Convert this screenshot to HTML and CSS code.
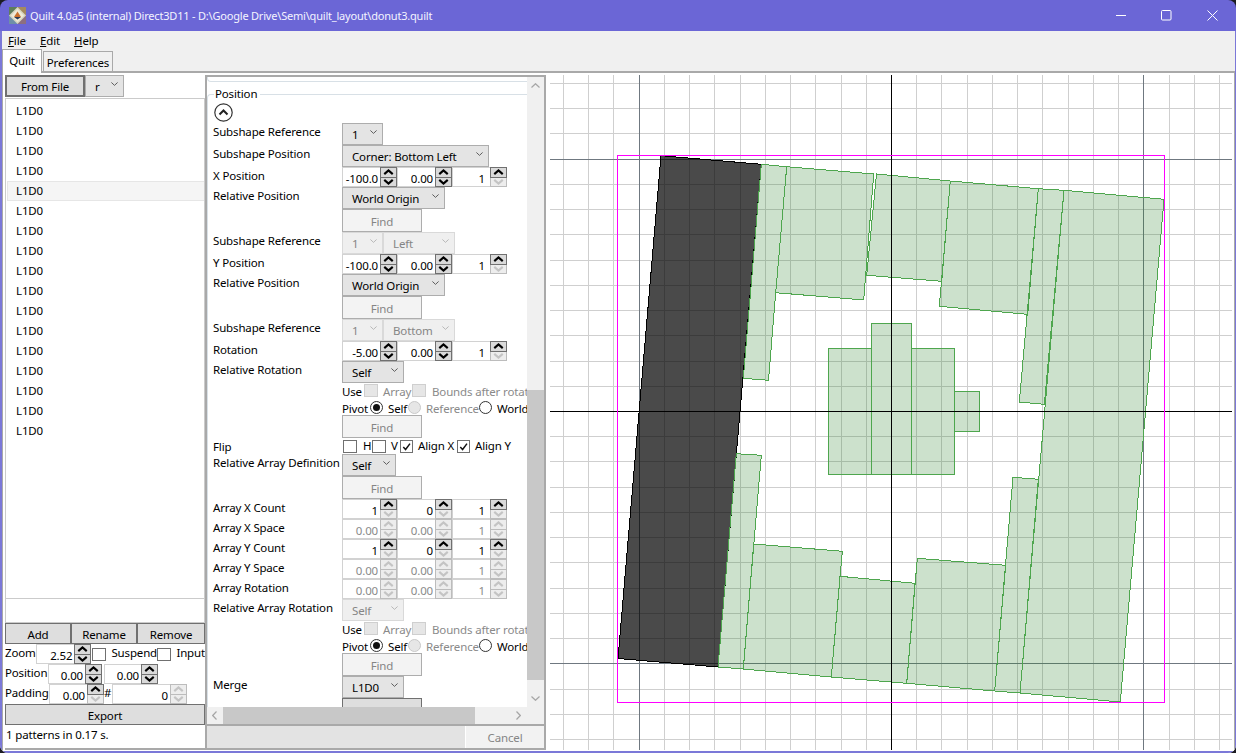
FILE: index.html
```html
<!DOCTYPE html>
<html lang="en">
<head>
<meta charset="utf-8">
<title>Quilt</title>
<link rel="stylesheet" href="styles.css">
</head>
<body>
<svg class="defs" width="0" height="0">
  <symbol id="up" viewBox="0 0 13 7"><path d="M1.5 6 6.5 1.7 11.500 6"/></symbol>
  <symbol id="down" viewBox="0 0 13 7"><path d="M1.5 1 6.5 5.300 11.500 1"/></symbol>
  <symbol id="dd" viewBox="0 0 9 5"><path d="M.5 .5 4.500 4.300 8.500 .5"/></symbol>
</svg>
<div class="window">
  <header class="titlebar">
    <svg class="app-icon" width="17" height="17" viewBox="0 0 17 17">
      <rect width="17" height="17" fill="#d8d5c2"/>
      <path d="M0 0H8.500L0 8.500Z" fill="#5f7d5c"/>
      <path d="M17 0V8.500L8.500 0Z" fill="#a58a5e"/>
      <path d="M0 17V8.500L8.500 17Z" fill="#6f8fa8"/>
      <path d="M17 17H8.500L17 8.500Z" fill="#8d6f7f"/>
      <path d="M8.500 2 15 8.500 8.500 15 2 8.500Z" fill="#efe9d6"/>
      <path d="M8.500 4.500 12 10H5Z" fill="#c9702e"/>
      <path d="M5 10H12L8.500 12.500Z" fill="#2c3a55"/>
    </svg>
    <span class="title-text">Quilt 4.0a5 (internal) Direct3D11 - D:\Google Drive\Semi\quilt_layout\donut3.quilt</span>
    <div class="win-controls">
      <svg width="10" height="11" viewBox="0 0 10 11"><path d="M0 5.500H10"/></svg>
      <svg width="11" height="11" viewBox="0 0 11 11"><rect x=".5" y=".5" width="9.500" height="9.500" rx="1"/></svg>
      <svg width="11" height="11" viewBox="0 0 11 11"><path d="M.5 .5 10.500 10.500M10.500 .5 .5 10.500"/></svg>
    </div>
  </header>
  <div class="main">
    <nav class="menubar">
      <span class="menu-file"><u>F</u>ile</span>
      <span class="menu-edit"><u>E</u>dit</span>
      <span class="menu-help"><u>H</u>elp</span>
    </nav>
    <div class="tabs">
      <div class="tab tab-active">Quilt</div>
      <div class="tab tab-pref">Preferences</div>
    </div>
    <div class="body">
      <aside class="left">
        <div class="src-row">
          <button class="btn btn-src">From File</button>
          <div class="dd dd-r">r<svg class="dd-arrow"><use href="#dd"/></svg></div>
        </div>
        <ul class="list">
          <li>L1D0</li><li>L1D0</li><li>L1D0</li><li>L1D0</li>
          <li class="selected">L1D0</li>
          <li>L1D0</li><li>L1D0</li><li>L1D0</li><li>L1D0</li><li>L1D0</li><li>L1D0</li><li>L1D0</li><li>L1D0</li><li>L1D0</li><li>L1D0</li><li>L1D0</li><li>L1D0</li>
        </ul>
        <div class="name-input"></div>
        <div class="btn-row">
          <button class="btn btn-add">Add</button>
          <button class="btn btn-add">Rename</button>
          <button class="btn btn-remove">Remove</button>
        </div>
        <div class="tool-row">
          <span class="tlabel t-zoom">Zoom</span>
          <div class="spin s-55"><span class="val">2.52</span><div class="sb"><i><svg><use href="#up"/></svg></i><i><svg><use href="#down"/></svg></i></div></div>
          <span class="check tool-check"></span><span class="opt-text t-suspend">Suspend</span>
          <span class="check"></span><span class="opt-text t-input">Input</span>
        </div>
        <div class="tool-row">
          <span class="tlabel t-pos">Position</span>
          <div class="spin s-54"><span class="val">0.00</span><div class="sb"><i><svg><use href="#up"/></svg></i><i><svg><use href="#down"/></svg></i></div></div>
          <div class="spin s-54 s-gap"><span class="val">0.00</span><div class="sb"><i><svg><use href="#up"/></svg></i><i><svg><use href="#down"/></svg></i></div></div>
        </div>
        <div class="tool-row">
          <span class="tlabel t-pad">Padding</span>
          <div class="spin s-55"><span class="val">0.00</span><div class="sb"><i><svg><use href="#up"/></svg></i><i class="off"><svg><use href="#down"/></svg></i></div></div>
          <span class="tlabel t-hash">#</span>
          <div class="spin s-75"><span class="val">0</span><div class="sb"><i class="off"><svg><use href="#up"/></svg></i><i class="off"><svg><use href="#down"/></svg></i></div></div>
        </div>
        <button class="btn btn-export">Export</button>
        <div class="status">1 patterns in 0.17 s.</div>
      </aside>

      <section class="middle">
        <div class="mid-main">
          <div class="viewport">
            <div class="prev-group"></div>
            <div class="group">
              <span class="legend">Position</span>
              <div class="collapse">
                <svg width="19" height="19" viewBox="0 0 19 19"><circle cx="9.500" cy="9.500" r="8.700"/><path d="M5.500 11.500 9.500 7.500 13.500 11.500"/></svg>
              </div>

              <div class="row r22"><span class="lbl">Subshape Reference</span><div class="dd d-40">1<svg class="dd-arrow"><use href="#dd"/></svg></div></div>
              <div class="row r22"><span class="lbl">Subshape Position</span><div class="dd d-147">Corner: Bottom Left<svg class="dd-arrow"><use href="#dd"/></svg></div></div>
              <div class="row r20"><span class="lbl">X Position</span>
                <div class="spin s-a"><span class="val">-100.0</span><div class="sb"><i><svg><use href="#up"/></svg></i><i><svg><use href="#down"/></svg></i></div></div>
                <div class="spin s-b"><span class="val">0.00</span><div class="sb"><i><svg><use href="#up"/></svg></i><i><svg><use href="#down"/></svg></i></div></div>
                <div class="spin s-c"><span class="val val-int">1</span><div class="sb"><i><svg><use href="#up"/></svg></i><i class="off"><svg><use href="#down"/></svg></i></div></div>
              </div>
              <div class="row r22"><span class="lbl">Relative Position</span><div class="dd d-103">World Origin<svg class="dd-arrow"><use href="#dd"/></svg></div></div>
              <div class="row r23"><span class="lbl"></span><button class="btn find">Find</button></div>

              <div class="row r22"><span class="lbl">Subshape Reference</span><div class="dd d-40 dis">1<svg class="dd-arrow"><use href="#dd"/></svg></div><div class="dd d-73 dis">Left<svg class="dd-arrow"><use href="#dd"/></svg></div></div>
              <div class="row r20"><span class="lbl">Y Position</span>
                <div class="spin s-a"><span class="val">-100.0</span><div class="sb"><i><svg><use href="#up"/></svg></i><i><svg><use href="#down"/></svg></i></div></div>
                <div class="spin s-b"><span class="val">0.00</span><div class="sb"><i><svg><use href="#up"/></svg></i><i><svg><use href="#down"/></svg></i></div></div>
                <div class="spin s-c"><span class="val val-int">1</span><div class="sb"><i><svg><use href="#up"/></svg></i><i class="off"><svg><use href="#down"/></svg></i></div></div>
              </div>
              <div class="row r22"><span class="lbl">Relative Position</span><div class="dd d-103">World Origin<svg class="dd-arrow"><use href="#dd"/></svg></div></div>
              <div class="row r23"><span class="lbl"></span><button class="btn find">Find</button></div>

              <div class="row r22"><span class="lbl">Subshape Reference</span><div class="dd d-40 dis">1<svg class="dd-arrow"><use href="#dd"/></svg></div><div class="dd d-73 dis">Bottom<svg class="dd-arrow"><use href="#dd"/></svg></div></div>
              <div class="row r20"><span class="lbl">Rotation</span>
                <div class="spin s-a"><span class="val">-5.00</span><div class="sb"><i><svg><use href="#up"/></svg></i><i><svg><use href="#down"/></svg></i></div></div>
                <div class="spin s-b"><span class="val">0.00</span><div class="sb"><i><svg><use href="#up"/></svg></i><i><svg><use href="#down"/></svg></i></div></div>
                <div class="spin s-c"><span class="val val-int">1</span><div class="sb"><i><svg><use href="#up"/></svg></i><i class="off"><svg><use href="#down"/></svg></i></div></div>
              </div>
              <div class="row r22"><span class="lbl">Relative Rotation</span><div class="dd d-62">Self<svg class="dd-arrow"><use href="#dd"/></svg></div></div>
              <div class="row r17"><span class="lbl"></span>
                <span class="opt-text o-use">Use</span><span class="check check-off"></span><span class="opt-text grey o-array">Array</span><span class="check check-off"></span><span class="opt-text grey o-bounds">Bounds after rotation</span>
              </div>
              <div class="row r15"><span class="lbl"></span>
                <span class="opt-text o-pivot">Pivot</span><span class="radio radio-on"></span><span class="opt-text o-self">Self</span><span class="radio radio-off"></span><span class="opt-text grey o-ref">Reference</span><span class="radio"></span><span class="opt-text o-world">World</span>
              </div>
              <div class="row r23"><span class="lbl"></span><button class="btn find">Find</button></div>

              <div class="row r16"><span class="lbl">Flip</span>
                <span class="check flip-first"></span><span class="opt-text o-h">H</span><span class="check"></span><span class="opt-text o-v">V</span>
                <span class="check checked"><svg viewBox="0 0 12 12"><path d="M2.500 6.500 5 9.300 9.800 2.800"/></svg></span><span class="opt-text o-alignx">Align X</span>
                <span class="check checked"><svg viewBox="0 0 12 12"><path d="M2.500 6.500 5 9.300 9.800 2.800"/></svg></span><span class="opt-text o-aligny">Align Y</span>
              </div>
              <div class="row r22"><span class="lbl">Relative Array Definition</span><div class="dd d-53">Self<svg class="dd-arrow"><use href="#dd"/></svg></div></div>
              <div class="row r23"><span class="lbl"></span><button class="btn find">Find</button></div>

              <div class="row r20"><span class="lbl">Array X Count</span>
                <div class="spin s-a"><span class="val">1</span><div class="sb"><i><svg><use href="#up"/></svg></i><i class="off"><svg><use href="#down"/></svg></i></div></div>
                <div class="spin s-b"><span class="val">0</span><div class="sb"><i><svg><use href="#up"/></svg></i><i class="off"><svg><use href="#down"/></svg></i></div></div>
                <div class="spin s-c"><span class="val val-int">1</span><div class="sb"><i><svg><use href="#up"/></svg></i><i class="off"><svg><use href="#down"/></svg></i></div></div>
              </div>
              <div class="row r20"><span class="lbl">Array X Space</span>
                <div class="spin s-a spin-off"><span class="val">0.00</span><div class="sb"><i class="off"><svg><use href="#up"/></svg></i><i class="off"><svg><use href="#down"/></svg></i></div></div>
                <div class="spin s-b spin-off"><span class="val">0.00</span><div class="sb"><i class="off"><svg><use href="#up"/></svg></i><i class="off"><svg><use href="#down"/></svg></i></div></div>
                <div class="spin s-c spin-off"><span class="val val-int">1</span><div class="sb"><i class="off"><svg><use href="#up"/></svg></i><i class="off"><svg><use href="#down"/></svg></i></div></div>
              </div>
              <div class="row r20"><span class="lbl">Array Y Count</span>
                <div class="spin s-a"><span class="val">1</span><div class="sb"><i><svg><use href="#up"/></svg></i><i class="off"><svg><use href="#down"/></svg></i></div></div>
                <div class="spin s-b"><span class="val">0</span><div class="sb"><i><svg><use href="#up"/></svg></i><i class="off"><svg><use href="#down"/></svg></i></div></div>
                <div class="spin s-c"><span class="val val-int">1</span><div class="sb"><i><svg><use href="#up"/></svg></i><i class="off"><svg><use href="#down"/></svg></i></div></div>
              </div>
              <div class="row r20"><span class="lbl">Array Y Space</span>
                <div class="spin s-a spin-off"><span class="val">0.00</span><div class="sb"><i class="off"><svg><use href="#up"/></svg></i><i class="off"><svg><use href="#down"/></svg></i></div></div>
                <div class="spin s-b spin-off"><span class="val">0.00</span><div class="sb"><i class="off"><svg><use href="#up"/></svg></i><i class="off"><svg><use href="#down"/></svg></i></div></div>
                <div class="spin s-c spin-off"><span class="val val-int">1</span><div class="sb"><i class="off"><svg><use href="#up"/></svg></i><i class="off"><svg><use href="#down"/></svg></i></div></div>
              </div>
              <div class="row r20"><span class="lbl">Array Rotation</span>
                <div class="spin s-a spin-off"><span class="val">0.00</span><div class="sb"><i class="off"><svg><use href="#up"/></svg></i><i class="off"><svg><use href="#down"/></svg></i></div></div>
                <div class="spin s-b spin-off"><span class="val">0.00</span><div class="sb"><i class="off"><svg><use href="#up"/></svg></i><i class="off"><svg><use href="#down"/></svg></i></div></div>
                <div class="spin s-c spin-off"><span class="val val-int">1</span><div class="sb"><i class="off"><svg><use href="#up"/></svg></i><i class="off"><svg><use href="#down"/></svg></i></div></div>
              </div>
              <div class="row r22"><span class="lbl">Relative Array Rotation</span><div class="dd d-62 dis">Self<svg class="dd-arrow"><use href="#dd"/></svg></div></div>
              <div class="row r17"><span class="lbl"></span>
                <span class="opt-text o-use">Use</span><span class="check check-off"></span><span class="opt-text grey o-array">Array</span><span class="check check-off"></span><span class="opt-text grey o-bounds">Bounds after rotation</span>
              </div>
              <div class="row r15"><span class="lbl"></span>
                <span class="opt-text o-pivot">Pivot</span><span class="radio radio-on"></span><span class="opt-text o-self">Self</span><span class="radio radio-off"></span><span class="opt-text grey o-ref">Reference</span><span class="radio"></span><span class="opt-text o-world">World</span>
              </div>
              <div class="row r23"><span class="lbl"></span><button class="btn find">Find</button></div>
              <div class="row r22"><span class="lbl">Merge</span><div class="dd d-62">L1D0<svg class="dd-arrow"><use href="#dd"/></svg></div></div>
              <div class="row r23"><span class="lbl"></span><button class="btn find find-on">Find</button></div>
            </div>
          </div>
          <div class="vscroll">
            <svg class="sc-arrow" width="9" height="5"><use href="#dd" transform="matrix(1 0 0 -1 0 5)"/></svg>
            <div class="vtrack"><div class="vthumb"></div></div>
            <svg class="sc-arrow" width="9" height="5"><use href="#dd"/></svg>
          </div>
        </div>
        <div class="hscroll">
          <svg class="sc-h" width="5" height="9" viewBox="0 0 5 9"><path d="M4.500 .5 .7 4.500 4.500 8.500"/></svg>
          <div class="hthumb"></div>
          <svg class="sc-h sc-right" width="5" height="9" viewBox="0 0 5 9"><path d="M.5 .5 4.300 4.500 .5 8.500"/></svg>
        </div>
        <footer class="mid-foot">
          <div class="foot-fill"></div>
          <button class="btn-cancel">Cancel</button>
        </footer>
      </section>

      <div class="canvas">
        <svg class="viewport-svg" viewBox="550 75 682 676" width="682" height="676">
          <path class="grid" d="M563.500 75V751M588.500 75V751M613.500 75V751M664.500 75V751M689.500 75V751M714.500 75V751M740.500 75V751M765.500 75V751M790.500 75V751M815.500 75V751M841.500 75V751M866.500 75V751M916.500 75V751M941.500 75V751M967.500 75V751M992.500 75V751M1017.500 75V751M1042.500 75V751M1068.500 75V751M1093.500 75V751M1118.500 75V751M1169.500 75V751M1194.500 75V751M1219.500 75V751
          M550 83.500H1232M550 108.500H1232M550 133.500H1232M550 184.500H1232M550 209.500H1232M550 234.500H1232M550 260.500H1232M550 285.500H1232M550 310.500H1232M550 335.500H1232M550 361.500H1232M550 386.500H1232M550 436.500H1232M550 461.500H1232M550 487.500H1232M550 512.500H1232M550 537.500H1232M550 562.500H1232M550 588.500H1232M550 613.500H1232M550 638.500H1232M550 689.500H1232M550 714.500H1232M550 739.500H1232"/>
          <path class="major" d="M639.500 75V751M1143.500 75V751M550 159.500H1232M550 663.500H1232"/>
          <polygon class="active-shape" points="661,155.700 761.300,164.300 718,667 618,658.500"/>
          <g class="shapes">
            <polygon points="761.300,164.300 786.700,166.700 775.700,292.700 768.500,380.300 743.300,378.300"/>
            <polygon points="786.700,166.700 873.700,174 863.700,300 775.700,292.700"/>
            <polygon points="876.500,174 950.300,181 941.700,281.300 866.700,275.300"/>
            <polygon points="950.300,181 1038.300,188.700 1027.700,314.300 939.300,306.300"/>
            <polygon points="1038.300,188.700 1064,190.300 1044.300,404.300 1019.300,402"/>
            <polygon points="1064,190.300 1164,199.300 1120.300,702 1020,693"/>
            <polygon points="1013,477.300 1038.300,479.300 1020,693 994.700,691"/>
            <polygon points="917.300,558.300 1005.700,565.300 994.700,691 906.700,683.300"/>
            <polygon points="840,576.300 915,583.300 906.700,683.300 831.300,677"/>
            <polygon points="753.700,544 842.300,551.300 831.300,677 743.300,669"/>
            <polygon points="736.300,453.700 761.300,455.300 743.300,669 718,667"/>
            <rect x="828.500" y="348.500" width="43" height="126"/>
            <rect x="871.500" y="323.500" width="40" height="151"/>
            <rect x="911.500" y="348.500" width="43" height="126"/>
            <rect x="954.500" y="391.500" width="25" height="40"/>
          </g>
          <path class="axis" d="M891.500 75V751M550 411.500H1232"/>
          <rect class="bounds" x="617.500" y="155.500" width="547" height="547"/>
        </svg>
      </div>
    </div>
  </div>
</div>
</body>
</html>
```

FILE: styles.css
```css
* { box-sizing: border-box; }
html, body { margin: 0; padding: 0; background: #1c1c22; }
body {
  width: 1236px;
  height: 753px;
  overflow: hidden;
  font-family: "Noto Sans", "Open Sans", sans-serif;
  font-size: 11.5px;
  letter-spacing: -.15px;
  color: #000;
}
.defs { position: absolute; }
symbol path { fill: none; }

.window {
  width: 1236px;
  height: 753px;
  display: flex;
  flex-direction: column;
  border-radius: 8px;
  overflow: hidden;
}

.titlebar {
  height: 31px;
  flex: none;
  background: #6b66d6;
  display: flex;
  align-items: center;
  padding-left: 9px;
  color: #f4f4ff;
}
.title-text { font-size: 11px; letter-spacing: -.2px; }
.app-icon { flex: none; margin-right: 4px; margin-top: 0; }
.win-controls {
  margin-left: auto;
  display: flex;
  align-items: center;
  gap: 35px;
  padding-right: 18px;
}
.win-controls svg { display: block; fill: none; stroke: #fff; stroke-width: 1; }

.main {
  flex: 1;
  display: flex;
  flex-direction: column;
  min-height: 0;
  background: #f0f0f0;
  border-left: 2px solid #7b78d8;
  border-right: 1px solid #7b78d8;
  border-bottom: 2px solid #7b78d8;
}

.menubar {
  height: 19px;
  flex: none;
  display: flex;
  align-items: center;
  padding-left: 6px;
}
.menu-file { width: 32px; }
.menu-edit { width: 34px; }

.tabs {
  height: 21px;
  flex: none;
  display: flex;
  align-items: flex-end;
  position: relative;
  z-index: 2;
}
.tab {
  height: 20px;
  display: flex;
  align-items: center;
  justify-content: center;
  border: 1px solid #a9a9a9;
  border-bottom: none;
  margin-left: 1px;
  background: #f0f0f0;
}
.tab-pref { width: 70px; padding-top: 1px; }
.tab-active {
  margin-left: 0;
  height: 24px;
  width: 40px;
  padding: 0 0 2px 0;
  margin-bottom: -2px;
  background: #fff;
}

.body {
  flex: 1;
  display: flex;
  min-height: 0;
  background: #fff;
  border-top: 2px solid #a9a9a9;
  border-left: 1px solid #a9a9a9;
  border-right: 1px solid #a9a9a9;
  padding: 2px 0 1px 2px;
}

/* left column */
.left {
  flex: none;
  width: 200px;
  display: flex;
  flex-direction: column;
}
.btn {
  font: inherit;
  letter-spacing: inherit;
  color: #000;
  background: #dedede;
  border: 1px solid #707070;
  padding: 1px 0 0;
  margin: 0;
}
.src-row { height: 22px; flex: none; display: flex; margin-bottom: 1px; }
.btn-src { width: 80px; border-width: 2px; padding: 0; }
.dd-r { width: 39px; }

.list {
  list-style: none;
  margin: 0;
  height: 501px;
  flex: none;
  border: 1px solid #cbcbcb;
  padding: 2px 0 0 1px;
  overflow: hidden;
}
.list li { height: 20px; line-height: 20px; padding-left: 9px; }
.list .selected {
  background: #f5f5f5;
  border: 1px solid #e6e6e6;
  border-right: none;
  line-height: 18px;
  padding-left: 8px;
}
.name-input {
  height: 24px;
  flex: none;
  border: 1px solid #cbcbcb;
  border-top: none;
}
.btn-row { height: 21px; flex: none; display: flex; }
.btn-add { width: 66px; }
.btn-remove { width: 68px; }
.tool-row {
  height: 20px;
  flex: none;
  display: flex;
  overflow: hidden;
}
.tlabel { line-height: 18px; white-space: nowrap; }
.t-zoom { width: 32px; }
.t-pos { width: 43px; }
.t-pad { width: 44px; }
.t-hash { width: 8px; }
.tool-check { margin-left: 1px; }
.t-suspend { margin-left: 5px; width: 46px; }
.t-input { margin-left: 5px; }
.s-gap { margin-left: 2px; }
.btn-export { height: 21px; flex: none; }
.status {
  flex: 1;
  line-height: 18px;
  padding: 1px 0 0 1px;
  border-bottom: 2px solid #a9a9a9;
}

/* spin boxes */
.spin {
  height: 20px;
  flex: none;
  display: flex;
  border: 1px solid #d2d2d2;
  background: #fff;
}
.s-55 { width: 55px; }
.s-54 { width: 54px; }
.s-75 { width: 75px; }
.s-a, .s-b, .s-c { width: 55px; }
.val {
  flex: 1;
  min-width: 0;
  overflow: hidden;
  text-align: right;
  white-space: nowrap;
  line-height: 21px;
  padding-right: 2px;
}
.val-int { padding-right: 5px; }
.spin-off .val { color: #8a8a8a; }
.sb { flex: none; width: 17px; display: flex; flex-direction: column; margin: -1px -1px -1px 0; }
.sb i {
  flex: 1;
  display: flex;
  align-items: center;
  justify-content: center;
  background: #dadada;
  border: 1px solid #707070;
  stroke: #000;
  stroke-width: 2.500;
  fill: none;
}
.sb i + i { border-top: none; }
.sb i svg { width: 11px; height: 6px; display: block; }
.sb i.off {
  background: #ededed;
  border-color: #bcbcbc;
  stroke: #c4c4c4;
}

/* dropdowns */
.dd {
  height: 22px;
  flex: none;
  position: relative;
  background: #e4e4e4;
  border: 1px solid #adadad;
  line-height: 21px;
  padding-left: 9px;
  white-space: nowrap;
}
.dd-arrow {
  position: absolute;
  right: 5px;
  top: 6px;
  width: 7px;
  height: 4px;
  fill: none;
  stroke: #555;
  stroke-width: 1.200;
}
.dis { background: #efefef; border-color: #d9d9d9; color: #858585; }
.dis .dd-arrow { stroke: #b5b5b5; }
.d-40 { width: 41px; }
.d-147 { width: 147px; }
.d-103 { width: 103px; }
.d-73 { width: 72px; }
.d-62 { width: 62px; }
.d-53 { width: 54px; }

/* middle */
.middle {
  flex: none;
  width: 341px;
  display: flex;
  flex-direction: column;
  border: 2px solid #a9a9a9;
}
.mid-main { flex: 1; min-height: 0; display: flex; }
.viewport {
  flex: 1;
  min-width: 0;
  overflow: hidden;
  background: #fff;
}
.prev-group {
  height: 5px;
  border: 1px solid #d8e0e6;
  border-top: none;
  border-right: none;
  border-radius: 0 0 0 4px;
}
.group {
  margin-top: 12px;
  position: relative;
  border-top: 1px solid #d8e0e6;
  border-left: 1px solid #d8e0e6;
  border-top-left-radius: 4px;
  padding: 8px 0 0 5px;
}
.legend {
  position: absolute;
  top: -10px;
  left: 6px;
  background: #fff;
  padding: 0 3px 0 1px;
  line-height: 18px;
}
.collapse { height: 20px; padding-left: 1px; }
.collapse svg { display: block; fill: none; stroke: #333; stroke-width: 1.200; }
.collapse path { stroke-width: 2; stroke: #222; }

.row { display: flex; flex: none; white-space: nowrap; }
.r15 { height: 15px; }
.r16 { height: 16px; }
.r17 { height: 17px; }
.r20 { height: 20px; }
.r22 { height: 22px; }
.r23 { height: 23px; }
.lbl { flex: 0 0 129px; min-width: 0; line-height: 18px; }
.find {
  width: 80px;
  height: 23px;
  background: #f3f3f3;
  border-color: #adadad;
  color: #858585;
}
.find-on { background: #dedede; border-color: #707070; color: #000; }

.opt-text { line-height: 17px; flex: none; white-space: nowrap; }
.grey { color: #8a8a8a; }
.check {
  flex: none;
  width: 14px;
  height: 13px;
  margin-top: 3px;
  border: 1px solid #707070;
  background: #fff;
  display: block;
}
.check svg { display: block; width: 11px; height: 11px; fill: none; stroke: #111; stroke-width: 1.600; }
.checked { width: 13px; }
.check-off { background: #e6e6e6; border-color: #cfcfcf; margin-top: 1px; }
.tool-row .check { margin-top: 4px; }
.r16 .check { margin-top: 2px; }
.r16 .opt-text { line-height: 16px; }
.flip-first { margin-left: 1px; }
.o-use { width: 22px; }
.o-array { width: 34px; padding-left: 5px; }
.o-bounds { padding-left: 6px; }
.o-pivot { width: 28px; }
.o-self { padding-left: 5px; width: 25px; }
.o-ref { padding-left: 5px; width: 58px; }
.o-world { padding-left: 5px; }
.o-h { padding-left: 6px; width: 15px; }
.o-v { padding-left: 5px; width: 14px; }
.o-alignx { padding-left: 5px; width: 44px; }
.o-aligny { padding-left: 5px; }
.radio {
  flex: none;
  width: 13px;
  height: 13px;
  border-radius: 50%;
  border: 1px solid #333;
  background: #fff;
  margin-top: 1px;
  position: relative;
}
.radio-on::after {
  content: "";
  position: absolute;
  left: 2px;
  top: 2px;
  width: 7px;
  height: 7px;
  border-radius: 50%;
  background: #111;
}
.radio-off { background: #e6e6e6; border-color: #c8c8c8; }

/* scrollbars */
.vscroll {
  flex: none;
  width: 17px;
  background: #f0f0f0;
  display: flex;
  flex-direction: column;
  align-items: center;
}
.sc-arrow { flex: none; margin: 6px 0; fill: none; stroke: #a6a6a6; stroke-width: 1.200; }
.vtrack { flex: 1; width: 100%; padding-top: 296px; }
.vthumb { height: 290px; background: #c8c8c8; }
.hscroll {
  flex: none;
  height: 17px;
  background: #f0f0f0;
  display: flex;
  align-items: center;
}
.sc-h { flex: none; margin-left: 5px; fill: none; stroke: #a6a6a6; stroke-width: 1.200; }
.hthumb { width: 252px; height: 100%; margin-left: 6px; background: #c8c8c8; }
.sc-right { margin-left: 41px; }
.mid-foot {
  height: 24px;
  flex: none;
  display: flex;
  border-top: 2px solid #a9a9a9;
}
.foot-fill { flex: 1; background: #e3e3e3; }
.btn-cancel {
  width: 79px;
  border: none;
  border-left: 1px solid #fff;
  background: #f2f2f2;
  color: #858585;
  font: inherit;
  letter-spacing: inherit;
  padding: 0;
}

/* drawing canvas */
.canvas { flex: 1; min-width: 0; padding-left: 4px; overflow: hidden; }
.viewport-svg { display: block; shape-rendering: crispEdges; }
.grid { fill: none; stroke: #cfcfcf; stroke-width: 1; }
.major { fill: none; stroke: #6f7880; stroke-width: 1; }
.axis { fill: none; stroke: #000; stroke-width: 1; }
.bounds { fill: none; stroke: #ff00ff; stroke-width: 1; }
.active-shape { fill: rgba(0, 0, 0, .71); stroke: #000; stroke-width: 1; }
.shapes polygon, .shapes rect { fill: rgba(40, 130, 40, .24); stroke: #4ea64e; stroke-width: 1; }
```
